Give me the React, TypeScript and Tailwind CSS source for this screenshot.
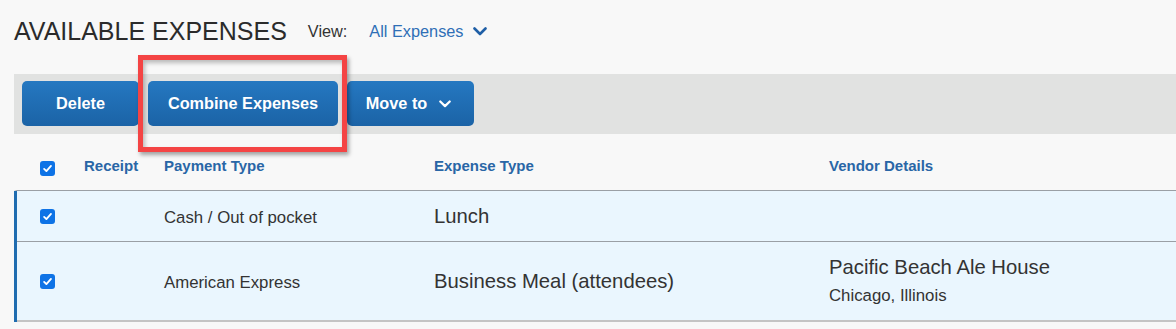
import React from 'react';

const FONT = { fontFamily: '"Liberation Sans", Arial, sans-serif' };

function Chevron({ className }: { className: string }) {
  return (
    <svg viewBox="0 0 14 9" className={className} fill="none" aria-hidden>
      <path d="M1.5 1.5 L7 7 L12.5 1.5" stroke="currentColor" strokeWidth="2.6" strokeLinecap="round" strokeLinejoin="round" />
    </svg>
  );
}

function Check() {
  return (
    <span className="flex h-[15px] w-[15px] items-center justify-center rounded-[3px] bg-[#0e73e6]">
      <svg viewBox="0 0 12 12" className="h-[11px] w-[11px]" fill="none" aria-hidden>
        <path d="M2.3 6.4 L4.8 8.8 L9.8 3.2" stroke="#fff" strokeWidth="2" strokeLinecap="round" strokeLinejoin="round" />
      </svg>
    </span>
  );
}

const btn =
  'flex h-[45px] items-center justify-center rounded-[5px] bg-gradient-to-b from-[#2578c1] to-[#1b63a6] text-[16.3px] font-bold text-white';

export default function App() {
  return (
    <div className="relative h-[329px] w-[1176px] overflow-hidden bg-[#f8f8f8] text-[#333]" style={FONT}>
      {/* title */}
      <div className="flex h-[74px] items-start pl-[14px] pt-[17px]">
        <h1 className="text-[25px] leading-[28px] text-[#2b2b2b]">AVAILABLE EXPENSES</h1>
        <span className="ml-[21px] mt-[4px] text-[16.3px] leading-[20px] text-[#333]">View:</span>
        <span className="ml-[22px] mt-[4px] flex items-center text-[16.3px] leading-[20px] text-[#2f6fb6]">
          All Expenses
          <Chevron className="ml-[10px] h-[9px] w-[14px] text-[#1f5fa6]" />
        </span>
      </div>

      {/* toolbar */}
      <div className="ml-[14px] flex h-[60px] gap-[9px] bg-[#e1e2e1] pl-[8px] pt-[7px]">
        <button className={`${btn} w-[117px]`}>Delete</button>
        <button className={`${btn} w-[190px]`}>Combine Expenses</button>
        <button className={`${btn} w-[127px] gap-[12px] pr-[4px]`}>
          Move to
          <Chevron className="h-[8px] w-[12px] text-white" />
        </button>
      </div>

      {/* table */}
      <div className="ml-[14px]">
        <div className="flex h-[57px] border-b border-l-[3px] border-b-[#9a9fa5] border-l-transparent text-[15px] font-bold text-[#2966a6]">
          <div className="w-[67px] pl-[23px] pt-[27px]">
            <Check />
          </div>
          <div className="w-[80px] pt-[23px] leading-[18px]">Receipt</div>
          <div className="w-[270px] pt-[23px] leading-[18px]">Payment Type</div>
          <div className="w-[395px] pt-[23px] leading-[18px]">Expense Type</div>
          <div className="pt-[23px] leading-[18px]">Vendor Details</div>
        </div>

        <div className="border-l-[3px] border-l-[#1f6cb0] bg-[#eaf6fe]">
          <div className="flex h-[51px] items-center border-b border-b-[#9a9fa5]">
            <div className="w-[67px] pl-[23px]">
              <Check />
            </div>
            <div className="w-[80px]" />
            <div className="w-[270px] pt-[3px] text-[16.8px]">Cash / Out of pocket</div>
            <div className="w-[395px] text-[20.3px]">Lunch</div>
            <div />
          </div>
          <div className="flex h-[80px] items-center border-b-2 border-b-[#c4c4c4]">
            <div className="w-[67px] pl-[23px]">
              <Check />
            </div>
            <div className="w-[80px]" />
            <div className="w-[270px] pt-[3px] text-[16.8px]">American Express</div>
            <div className="w-[395px] text-[20.3px]">Business Meal (attendees)</div>
            <div className="pb-[1px]">
              <div className="text-[20.3px] leading-[24px]">Pacific Beach Ale House</div>
              <div className="mt-[7px] text-[16.8px] leading-[20px]">Chicago, Illinois</div>
            </div>
          </div>
        </div>
      </div>

      {/* annotation highlight */}
      <div className="absolute left-[138px] top-[55px] h-[97px] w-[209px] border-[5px] border-[#f44444] shadow-[2px_3px_4px_rgba(0,0,0,0.35),inset_2px_3px_4px_rgba(0,0,0,0.25)]" />
    </div>
  );
}
